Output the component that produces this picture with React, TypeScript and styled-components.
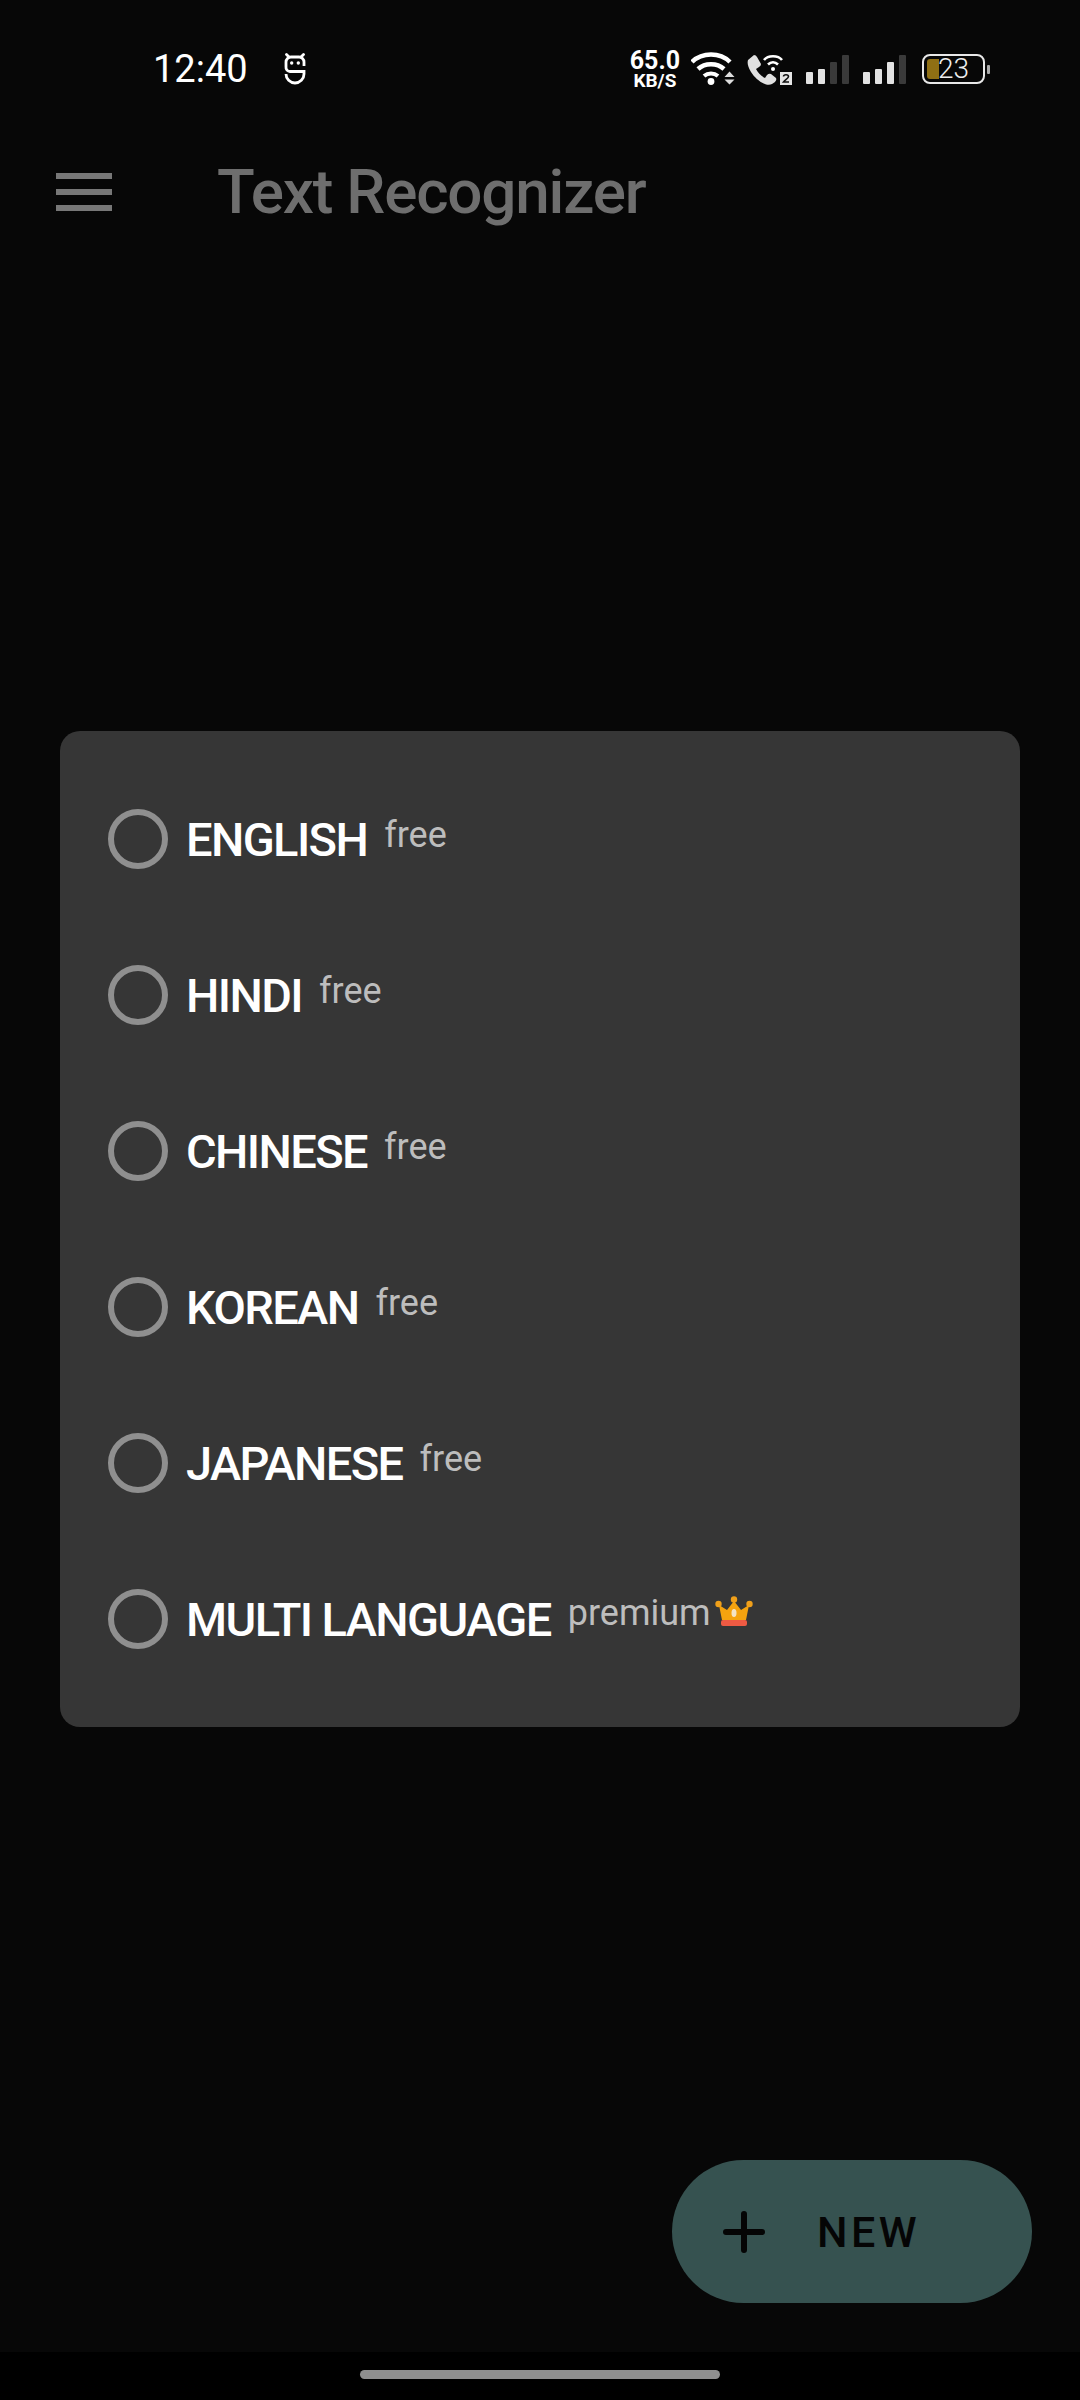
import styled, { createGlobalStyle } from 'styled-components'
import { Fragment } from 'react'

const languages = [
  { name: 'ENGLISH', tag: 'free' },
  { name: 'HINDI', tag: 'free' },
  { name: 'CHINESE', tag: 'free' },
  { name: 'KOREAN', tag: 'free' },
  { name: 'JAPANESE', tag: 'free' },
  { name: 'MULTI LANGUAGE', tag: 'premium', crown: true },
]

const RobotIcon = () => (
  <svg width="24" height="32" viewBox="0 0 24 32" fill="none" stroke="#fff" strokeWidth="2.800">
    <path d="M3.500 1.500L6 4M20.500 1.500L18 4" strokeLinecap="round" />
    <path d="M21 13V9a5 5 0 0 0-5-5H8a5 5 0 0 0-5 5v5a4 4 0 0 0 4 4.500h14V21a9 9 0 0 1-18 0" />
    <circle cx="8.700" cy="10" r="1.700" fill="#fff" stroke="none" />
    <circle cx="15.300" cy="10" r="1.700" fill="#fff" stroke="none" />
  </svg>
)

const WifiIcon = () => (
  <svg width="44" height="34" viewBox="0 0 44 34" fill="none">
    <path d="M1 10C11 0 29 0 39 10" stroke="#fff" strokeWidth="4.500" />
    <path d="M7 17C14 10.500 26 10.500 33 17" stroke="#fff" strokeWidth="4.500" />
    <path d="M13 24C17 20.500 23 20.500 27 24" stroke="#fff" strokeWidth="4" />
    <circle cx="20" cy="29.500" r="3.400" fill="#fff" />
    <path d="M33.500 25l5-5.500 5 5.500zM33.500 27.500h10l-5 5z" fill="#ddd" />
  </svg>
)

const CallIcon = () => (
  <svg width="46" height="34" viewBox="0 0 46 34" fill="none">
    <path
      d="M2 8L8 3Q10 3 11 5L15 12Q15 14 13 15L10 17C12 21 15 24 19 26L21 23Q23 21 25 22L30 26Q31 28 29 30L26 32C20 35 10 28 5 20C2 15 1 11 2 8z"
      fill="#e0e0e0"
    />
    <path d="M18 8C22 3 32 3 36 8" stroke="#fff" strokeWidth="2.600" />
    <path d="M22 12.500C25 9.500 29 9.500 32 12.500" stroke="#fff" strokeWidth="2.600" />
    <circle cx="27" cy="17" r="2" fill="#fff" />
    <rect x="34" y="20" width="12" height="13" fill="#e6e6e6" />
    <path d="M37.500 24.500c0-2.400 5-2.400 5 0 0 1.800-3 3-5 5.500h5.500" stroke="#111" strokeWidth="1.600" />
  </svg>
)

const CrownIcon = () => (
  <svg width="38" height="30" viewBox="0 0 38 30">
    <path d="M4 9l8 5 7-9 7 9 8-5-3 15H7z" fill="#f5a30f" />
    <circle cx="3.500" cy="8" r="3.200" fill="#f0a01a" />
    <circle cx="34.500" cy="8" r="3.200" fill="#f0a01a" />
    <circle cx="19" cy="3.500" r="3.200" fill="#f0a01a" />
    <ellipse cx="19" cy="17" rx="2.500" ry="4" fill="#f4e3c4" />
    <rect x="6" y="24" width="26" height="6" rx="2" fill="#ee5a43" />
  </svg>
)

const App = () => {
  return (
    <Fragment>
      <GlobalStyle />
      <Page>
        <StatusBar>
          <Time>12:40</Time>
          <RobotSlot>
            <RobotIcon />
          </RobotSlot>
          <StatusRight>
            <Speed>
              <SpeedValue>65.0</SpeedValue>
              <SpeedUnit>KB/S</SpeedUnit>
            </Speed>
            <WifiIcon />
            <CallIcon />
            <Signal>
              <Bar $h={12} $on />
              <Bar $h={15} $on />
              <Bar $h={22} />
              <Bar $h={29} />
            </Signal>
            <Signal>
              <Bar $h={12} $on />
              <Bar $h={15} $on />
              <Bar $h={22} $on />
              <Bar $h={29} />
            </Signal>
            <Battery>
              <BatteryFill />
              <BatteryText>23</BatteryText>
              <BatteryNub />
            </Battery>
          </StatusRight>
        </StatusBar>

        <AppBar>
          <Burger>
            <span />
            <span />
            <span />
          </Burger>
          <Title>Text Recognizer</Title>
        </AppBar>

        <Card>
          {languages.map((lang) => (
            <Row key={lang.name}>
              <Radio />
              <Label>{lang.name}</Label>
              <Tag $raised={lang.crown}>{lang.tag}</Tag>
              {lang.crown && (
                <CrownSlot>
                  <CrownIcon />
                </CrownSlot>
              )}
            </Row>
          ))}
        </Card>

        <Fab>
          <svg width="42" height="42" viewBox="0 0 42 42" fill="none" stroke="#050505" strokeWidth="6" strokeLinecap="round">
            <path d="M21 3v36M3 21h36" />
          </svg>
          <FabText>NEW</FabText>
        </Fab>

        <NavBar>
          <Handle />
        </NavBar>
      </Page>
    </Fragment>
  )
}

const GlobalStyle = createGlobalStyle`
  html, body {
    margin: 0;
    padding: 0;
    background: #070707;
  }
  * {
    box-sizing: border-box;
  }
`

const Page = styled.div`
  width: 1080px;
  height: 2400px;
  display: flex;
  flex-direction: column;
  background: #070707;
  font-family: Roboto, "Liberation Sans", sans-serif;
  overflow: hidden;
`

const StatusBar = styled.div`
  height: 136px;
  display: flex;
  align-items: center;
  padding: 2px 95px 0 153px;
`

const Time = styled.div`
  font-size: 38px;
  line-height: 44px;
  color: #fff;
`

const RobotSlot = styled.div`
  display: flex;
  margin-left: 35px;
`

const StatusRight = styled.div`
  margin-left: auto;
  display: flex;
  align-items: center;
  gap: 11px;
`

const Speed = styled.div`
  display: flex;
  flex-direction: column;
  align-items: center;
  color: #fff;
  font-weight: 700;
`

const SpeedValue = styled.div`
  font-size: 25px;
  line-height: 24px;
`

const SpeedUnit = styled.div`
  font-size: 19px;
  line-height: 16px;
`

const Signal = styled.div`
  display: flex;
  align-items: flex-end;
  gap: 5px;
  height: 30px;
  margin-left: 3px;
`

const Bar = styled.div<{ $h: number; $on?: boolean }>`
  width: 7px;
  height: ${(p) => p.$h}px;
  border-radius: 1px;
  background: ${(p) => (p.$on ? '#e2e2e2' : '#3a3a3a')};
`

const Battery = styled.div`
  position: relative;
  width: 63px;
  height: 30px;
  margin-left: 5px;
  border: 2px solid #e8e8e8;
  border-radius: 8px;
  display: flex;
  align-items: center;
`

const BatteryFill = styled.div`
  width: 12px;
  height: 20px;
  margin-left: 3px;
  border-radius: 3px 0 0 3px;
  background: #8f6f14;
`

const BatteryText = styled.div`
  margin-left: -1px;
  font-size: 28px;
  line-height: 28px;
  font-weight: 300;
  color: #eee;
`

const BatteryNub = styled.div`
  position: absolute;
  right: -7px;
  top: 9px;
  width: 3px;
  height: 9px;
  border-radius: 1px;
  background: #aaa;
`

const AppBar = styled.div`
  height: 112px;
  display: flex;
  align-items: center;
  padding-left: 56px;
`

const Burger = styled.div`
  width: 56px;
  display: flex;
  flex-direction: column;
  gap: 10px;

  span {
    display: block;
    height: 6px;
    background: #777;
  }
`

const Title = styled.div`
  margin-left: 105px;
  font-size: 62px;
  line-height: 70px;
  font-weight: 500;
  letter-spacing: -1.200px;
  color: #6e6e6e;
`

const Card = styled.div`
  height: 996px;
  margin: 483px 60px 0;
  padding-top: 30px;
  border-radius: 20px;
  background: #363636;
`

const Row = styled.div`
  height: 156px;
  display: flex;
  align-items: center;
  padding-left: 48px;
`

const Radio = styled.div`
  width: 60px;
  height: 60px;
  border: 6.500px solid #8f8f8f;
  border-radius: 50%;
`

const Label = styled.div`
  margin-left: 18px;
  margin-top: 2px;
  font-size: 47px;
  line-height: 56px;
  font-weight: 500;
  letter-spacing: -1.600px;
  color: #fff;
`

const Tag = styled.div<{ $raised?: boolean }>`
  margin-left: 17px;
  margin-bottom: ${(p) => (p.$raised ? 12 : 8)}px;
  font-size: 36px;
  line-height: 42px;
  color: #bdbdbd;
`

const CrownSlot = styled.div`
  display: flex;
  margin-left: 4px;
  margin-bottom: 16px;
`

const Fab = styled.div`
  align-self: flex-end;
  width: 360px;
  height: 143px;
  margin: 433px 48px 0 0;
  border-radius: 72px;
  background: #365250;
  display: flex;
  align-items: center;
  padding-left: 51px;
`

const FabText = styled.div`
  margin-left: 52px;
  font-size: 43px;
  font-weight: 500;
  letter-spacing: 3.500px;
  color: #050505;
`

const NavBar = styled.div`
  height: 48px;
  margin-top: auto;
  background: #000;
  display: flex;
  justify-content: center;
  padding-top: 18px;
`

const Handle = styled.div`
  width: 360px;
  height: 9px;
  border-radius: 5px;
  background: #8f8f8f;
`

export default App
